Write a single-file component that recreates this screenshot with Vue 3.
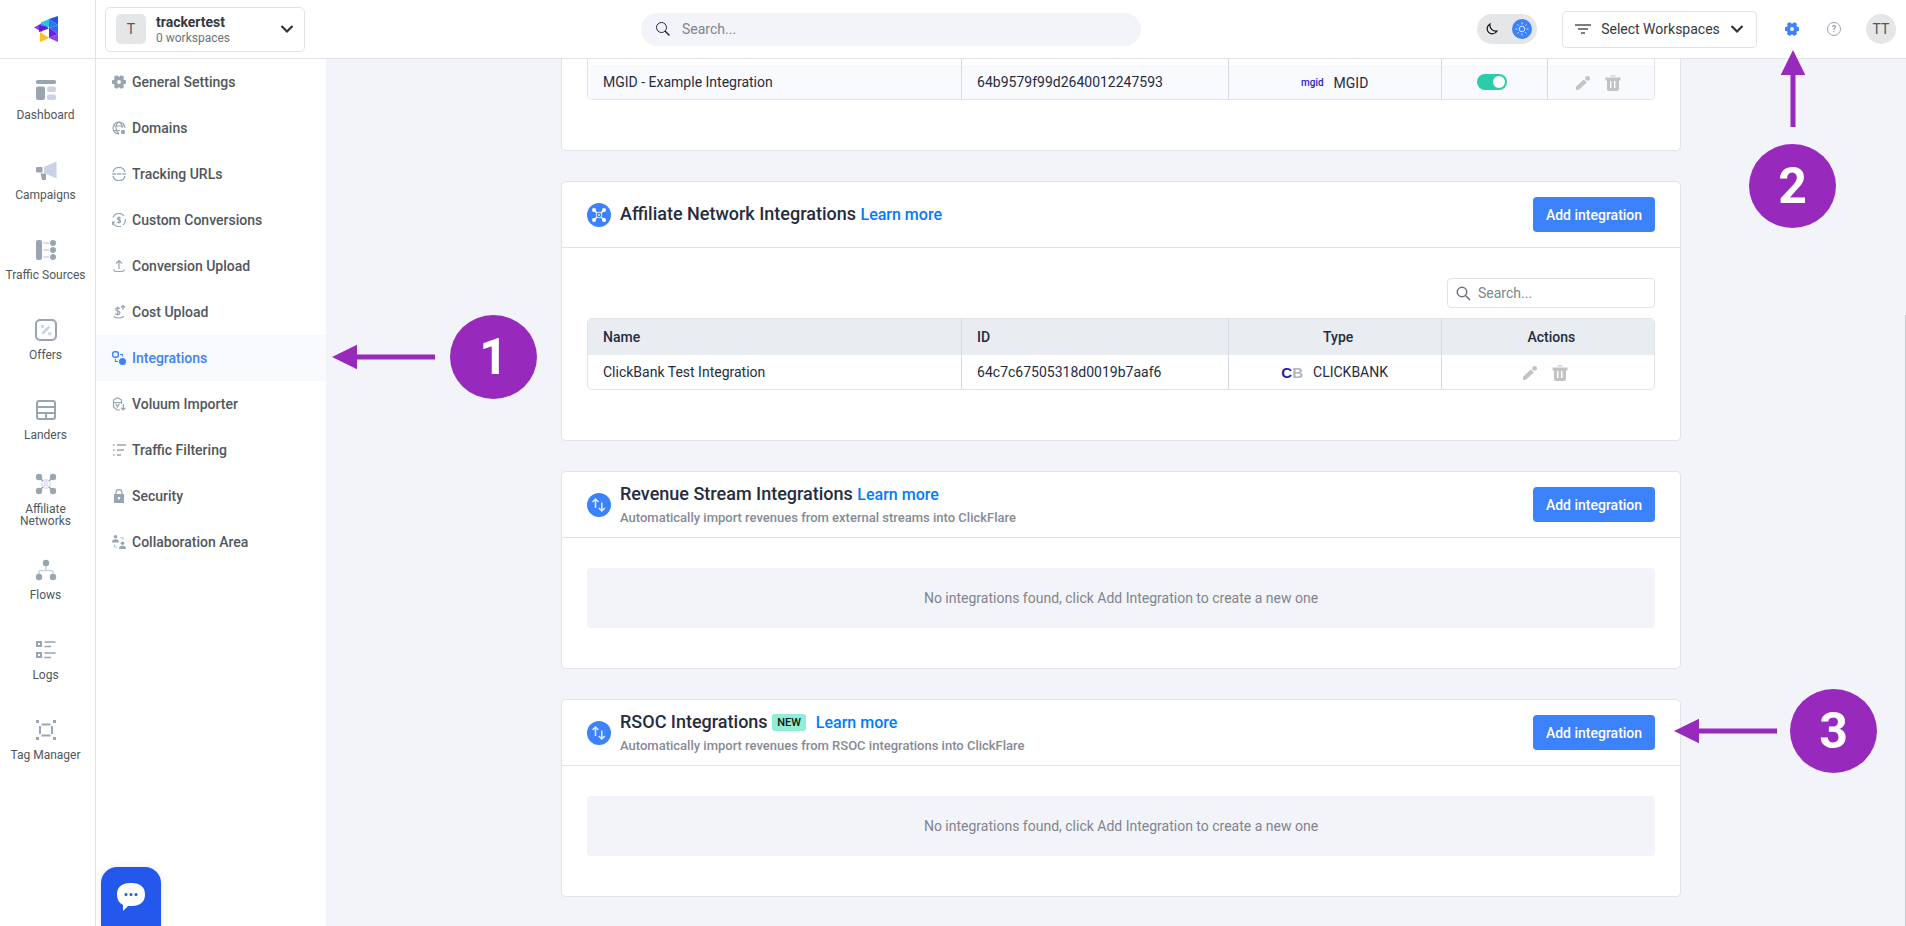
<script setup>
import { ref } from "vue";

const topSearch = ref("");
const tableSearch = ref("");
const mgidEnabled = ref(true);

const mainNav = [
  { label: "Dashboard", icon: "dashboard" },
  { label: "Campaigns", icon: "campaigns" },
  { label: "Traffic Sources", icon: "sources" },
  { label: "Offers", icon: "offers" },
  { label: "Landers", icon: "landers" },
  { label: "Affiliate Networks", icon: "networks" },
  { label: "Flows", icon: "flows" },
  { label: "Logs", icon: "logs" },
  { label: "Tag Manager", icon: "tags" },
];

const settingsNav = [
  { label: "General Settings", icon: "gear" },
  { label: "Domains", icon: "globe" },
  { label: "Tracking URLs", icon: "www" },
  { label: "Custom Conversions", icon: "conversions" },
  { label: "Conversion Upload", icon: "upload" },
  { label: "Cost Upload", icon: "cost" },
  { label: "Integrations", icon: "integrations", active: true },
  { label: "Voluum Importer", icon: "importer" },
  { label: "Traffic Filtering", icon: "filter" },
  { label: "Security", icon: "lock" },
  { label: "Collaboration Area", icon: "collab" },
];

const emptyCards = [
  {
    title: "Revenue Stream Integrations",
    text: "Automatically import revenues from external streams into ClickFlare",
  },
  {
    title: "RSOC Integrations",
    text: "Automatically import revenues from RSOC integrations into ClickFlare",
    isNew: true,
  },
];

const steps = [
  { number: 1, direction: "left" },
  { number: 2, direction: "up" },
  { number: 3, direction: "left" },
];
</script>

<template>
  <!-- shared shapes -->
  <svg class="sprite" aria-hidden="true">
    <symbol id="gear" viewBox="0 0 14 14">
      <circle cx="7" cy="7" r="3.700" fill="none" stroke="currentColor" stroke-width="3.600" />
      <g fill="currentColor">
        <rect x="0" y="5" width="3" height="4" rx=".8" />
        <rect x="0" y="5" width="3" height="4" rx=".8" transform="rotate(60 7 7)" />
        <rect x="0" y="5" width="3" height="4" rx=".8" transform="rotate(120 7 7)" />
        <rect x="0" y="5" width="3" height="4" rx=".8" transform="rotate(180 7 7)" />
        <rect x="0" y="5" width="3" height="4" rx=".8" transform="rotate(240 7 7)" />
        <rect x="0" y="5" width="3" height="4" rx=".8" transform="rotate(300 7 7)" />
      </g>
    </symbol>
    <symbol id="chevron" viewBox="0 0 14 10">
      <path d="M1.500 2 7 7.500 12.500 2" fill="none" stroke="#2f343b" stroke-width="2.200" />
    </symbol>
    <symbol id="pencil" viewBox="0 0 16 16">
      <path fill="#c3c3c3" d="M1 15v-3.200l7.800-7.400 3 3L4.200 14.600z" />
      <circle cx="12.600" cy="3.400" r="2.400" fill="#c3c3c3" />
    </symbol>
    <symbol id="trash" viewBox="0 0 16 16">
      <path fill="#cdd3e8" d="M5 1.500Q5.500 0 7 0h2q1.500 0 2 1.500z" />
      <path fill="#c3c3c3" fill-rule="evenodd" d="M.5 2.500h15v3H14V14q0 2-2 2H4q-2 0-2-2V5.500H.5zM5 6v7h1.500V6zm4 0v7h1.500V6z" />
    </symbol>
    <symbol id="arrows" viewBox="0 0 24 24">
      <circle cx="12" cy="12" r="12" fill="#3b82fc" />
      <path d="M8.500 15V6M5.500 9l3-3 3 3M14.800 9.500v8M11.800 15l3 3 3-3" fill="none" stroke="#e3ebfd" stroke-width="1.500" />
    </symbol>
  </svg>

  <div class="app">
    <header class="topbar">
      <a class="logo" href="#" aria-label="ClickFlare">
        <svg width="24" height="26" viewBox="0 0 24 26">
          <path fill="#8b3cf0" d="M0 11.500 8 7v9z" />
          <path fill="#2bc1e0" d="M7 6.500 15 3v8z" />
          <path fill="#26a8dc" d="M7 6.500V14l8-3z" />
          <path fill="#2352e8" d="M15 3 24 0v9z" />
          <path fill="#3173f0" d="M15 3v9l9-3z" />
          <path fill="#5a1fd6" d="M5 9v7l10-3.500-3-2z" />
          <path fill="#2d6eea" d="M24 9v9l-9-6z" />
          <path fill="#6a22e0" d="M15 12v10l9-4z" />
          <path fill="#8b45f0" d="M24 18v8l-9-4z" />
          <path fill="#fdbf2d" d="M6 16v10l9-4z" />
        </svg>
      </a>
      <button class="account">
        <span class="accountLetter">T</span>
        <span class="accountText">
          <strong>trackertest</strong>
          <small>0 workspaces</small>
        </span>
        <svg width="14" height="10"><use href="#chevron" /></svg>
      </button>

      <label class="topSearch">
        <svg width="14" height="14" viewBox="0 0 14 14" fill="none" stroke="#23283a">
          <circle cx="5.500" cy="5.500" r="5" />
          <path d="m9 9 4.500 4.500" stroke-width="1.500" />
        </svg>
        <input v-model="topSearch" type="text" placeholder="Search..." aria-label="Search" />
      </label>

      <div class="actions">
        <button class="theme" aria-label="Switch theme">
          <svg width="12" height="12" viewBox="0 0 12 12" fill="none" stroke="#111" stroke-width="1.200">
            <path d="M4 1a5.200 5.200 0 1 0 7 7A6 6 0 0 1 4 1z" />
          </svg>
          <span class="themeKnob">
            <svg width="14" height="14" viewBox="0 0 14 14" fill="none" stroke="#d6e5ff">
              <circle cx="7" cy="7" r="2.800" />
              <path d="M7 .5v2M7 11.500v2M.5 7h2M11.500 7h2M2.400 2.400l1.400 1.400M10.200 10.200l1.400 1.400M2.400 11.600l1.400-1.400M10.200 3.800l1.400-1.400" />
            </svg>
          </span>
        </button>
        <button class="workspaces">
          <svg width="16" height="10" viewBox="0 0 16 10" stroke="#50565e" stroke-width="1.500">
            <path d="M0 1h16M3 5h10M6 9h4" />
          </svg>
          <span>Select Workspaces</span>
          <svg width="14" height="10"><use href="#chevron" /></svg>
        </button>
        <button class="iconButton settings" aria-label="Settings">
          <svg width="14" height="14"><use href="#gear" /></svg>
        </button>
        <button class="iconButton help" aria-label="Help">?</button>
        <button class="avatar">TT</button>
      </div>
    </header>

    <div class="body">
      <nav class="rail">
        <a v-for="item in mainNav" :key="item.label" href="#">
          <svg width="22" height="22" viewBox="0 0 22 22" fill="#99a5b0">
            <template v-if="item.icon === 'dashboard'">
              <rect x="1" y="1" width="20" height="4" rx="1.500" />
              <rect x="1" y="7.500" width="9" height="13.500" rx="2" />
              <rect x="12" y="7.500" width="9" height="5.500" rx="2" fill="#ccd2e6" />
              <rect x="12" y="15.500" width="9" height="5.500" rx="2" fill="#ccd2e6" />
            </template>
            <template v-else-if="item.icon === 'campaigns'">
              <rect x="1" y="8" width="6.500" height="5.500" rx="1" />
              <path d="M5.500 14.500H11V20q0 1-1 1H7z" />
              <path d="M9 8 21.500 2.500v17L9 14z" fill="#ccd2e6" />
            </template>
            <template v-else-if="item.icon === 'sources'">
              <rect x="1" y="1" width="6" height="20" rx="2" />
              <path d="M8.500 4H14M8.500 11H14M8.500 18H14" stroke="#ccd2e6" stroke-width="1.500" />
              <circle cx="18" cy="4" r="3" /><circle cx="18" cy="11" r="3" /><circle cx="18" cy="18" r="3" />
            </template>
            <template v-else-if="item.icon === 'offers'">
              <rect x="1" y="1" width="20" height="20" rx="4" fill="none" stroke="#99a5b0" stroke-width="2" />
              <path d="m7.500 14.500 7-7" stroke="#ccd2e6" stroke-width="2.500" />
              <circle cx="7.500" cy="7.500" r="1.700" fill="#ccd2e6" /><circle cx="14.700" cy="14.700" r="1.700" fill="#ccd2e6" />
            </template>
            <template v-else-if="item.icon === 'landers'">
              <path d="M2 4q0-2 2-2h14q2 0 2 2v14q0 2-2 2H4q-2 0-2-2zM2 8h18M2 14h18M11 14v6" fill="none" stroke="#99a5b0" stroke-width="2" />
            </template>
            <template v-else-if="item.icon === 'networks'">
              <path d="m4 4 14 14M18 4 4 18" stroke="#99a5b0" stroke-width="1.500" />
              <circle cx="4" cy="4" r="3.200" /><circle cx="18" cy="4" r="3.200" /><circle cx="4" cy="18" r="3.200" /><circle cx="18" cy="18" r="3.200" />
              <circle cx="11" cy="11" r="4.200" fill="#fff" stroke="#ccd2e6" />
              <circle cx="11" cy="9.700" r="1.500" fill="none" stroke="#ccd2e6" /><path d="M8 13.500q3-3 6 0" fill="none" stroke="#ccd2e6" />
            </template>
            <template v-else-if="item.icon === 'flows'">
              <path d="M11 6v5.500M4 16v-2.500q0-2 2-2h10q2 0 2 2V16" fill="none" stroke="#ccd2e6" stroke-width="1.500" />
              <circle cx="11" cy="4" r="3.200" /><circle cx="4" cy="18" r="3.200" /><circle cx="18" cy="18" r="3.200" />
            </template>
            <template v-else-if="item.icon === 'logs'">
              <path d="M2 3h4v4H2zM2 14h4v4H2z" fill="none" stroke="#99a5b0" stroke-width="2" />
              <path d="M9.500 3H20.500M9.500 7.500h6.500M9.500 14H20.500M9.500 18.500h6.500" stroke="#99a5b0" stroke-width="1.700" />
            </template>
            <template v-else>
              <path d="M6.500 5.500h9M5 7v8M17 7v8M6.500 16.500h9" stroke="#99a5b0" stroke-width="2" />
              <path d="M1 1h3v3H1zM18 1h3v3h-3zM1 18h3v3H1zM18 18h3v3h-3z" />
            </template>
          </svg>
          <span>{{ item.label }}</span>
        </a>
      </nav>

      <nav class="settingsNav">
        <a v-for="item in settingsNav" :key="item.label" href="#" :class="{ active: item.active }">
          <svg width="14" height="14" viewBox="0 0 14 14" fill="none" stroke="currentColor" stroke-width="1.200">
            <use v-if="item.icon === 'gear'" href="#gear" stroke="none" />
            <template v-else-if="item.icon === 'globe'">
              <path d="M13 7A6 6 0 1 0 7 13M7 1Q3.500 3 4 7t3 6M7 1q3.500 2 3 6M1.500 5h11M1.500 9.500H8" />
              <circle cx="11" cy="11" r="2.200" fill="currentColor" stroke="none" />
            </template>
            <template v-else-if="item.icon === 'www'">
              <path d="M1 5a6.200 6.200 0 0 1 12 0M1 9a6.200 6.200 0 0 0 12 0" />
              <path d="m0 6 1 2 1-2 1 2 1-2m1 0 1 2 1-2 1 2 1-2m1 0 1 2 1-2 1 2 1-2" stroke-width=".8" />
            </template>
            <template v-else-if="item.icon === 'conversions'">
              <path d="M1 4.500A6.300 6.300 0 0 1 12 3M13.300 6A6.300 6.300 0 0 1 11 12M9 13.300A6.300 6.300 0 0 1 1 9.500M.5 12V9H3" />
              <path d="M8.800 5.200Q7 4 5.600 5q-.8 1 1.400 1.900T8.500 9Q7 10.200 5.200 8.900M7 3.500v7" />
            </template>
            <template v-else-if="item.icon === 'upload'">
              <path d="M7 10V1.500M4 4.500l3-3 3 3M1.500 10.500Q2 12.500 4 12.500h6q2 0 2.500-2" />
            </template>
            <template v-else-if="item.icon === 'cost'">
              <path d="M8 3.800Q6 2.200 4 3.500 3 5.200 5.800 6T7.500 9Q5.500 10.300 3.200 8.800M5.700 1.500v9M1.500 11.500q5 3 10.500 0M11 5V1M9 2.500l2-2 2 2" />
            </template>
            <template v-else-if="item.icon === 'integrations'">
              <rect x=".7" y=".7" width="5.600" height="5.600" rx="2" stroke-width="1.400" />
              <circle cx="10.500" cy="10.500" r="3.500" fill="currentColor" stroke="none" />
              <path d="M8 3.500h2.500v2M3.500 8v2.500H6" />
            </template>
            <template v-else-if="item.icon === 'importer'">
              <path d="M9.500 7V3L5.500.8 1.500 3v7L5 13h3M1.500 5.500h8M3.500 6.500 5.500 10l2-3.500M11.300 7v6M9 10.800l2.300 2.200 2.200-2.200" />
            </template>
            <template v-else-if="item.icon === 'filter'">
              <path d="M1 2h1.500M5 2h9M1 7h1.500M5 7h7M1 12h1.500M5 12h4" stroke-width="1.500" />
            </template>
            <template v-else-if="item.icon === 'lock'">
              <path d="M4 5V3.500a3 3 0 0 1 6 0V5" stroke-width="1.300" />
              <path d="M2 5h10v9H2zm5 3a1.300 1.300 0 1 0 0 2.600A1.300 1.300 0 0 0 7 8z" fill="currentColor" fill-rule="evenodd" stroke="none" />
            </template>
            <template v-else>
              <g fill="currentColor" stroke="none">
                <circle cx="3.500" cy="1.800" r="1.800" /><path d="M0 7.500Q0 4.300 3.500 4.300T7 7.500z" />
                <circle cx="10.500" cy="8.300" r="1.800" /><path d="M7 14q0-3.200 3.500-3.200T14 14z" />
              </g>
              <path d="M8.500 2.500h2.500V5M2.500 9.500V12H5" stroke="#c2c9d2" />
            </template>
          </svg>
          {{ item.label }}
        </a>
      </nav>

      <main class="content">
        <div class="cards">
          <section class="card cardCut">
            <table>
              <colgroup>
                <col class="colName" /><col class="colId" /><col class="colType" /><col class="colHalf" /><col class="colHalf" />
              </colgroup>
              <tbody>
                <tr class="cutRow"><td></td><td></td><td></td><td></td><td></td></tr>
                <tr class="striped">
                  <td>MGID - Example Integration</td>
                  <td>64b9579f99d2640012247593</td>
                  <td class="center"><span class="type"><b class="mgid">mgid</b>MGID</span></td>
                  <td class="center controls"><input v-model="mgidEnabled" class="switch" type="checkbox" aria-label="Enabled" /></td>
                  <td class="center controls">
                    <span class="rowActions">
                      <button aria-label="Edit"><svg width="16" height="16"><use href="#pencil" /></svg></button>
                      <button aria-label="Delete"><svg width="16" height="16"><use href="#trash" /></svg></button>
                    </span>
                  </td>
                </tr>
              </tbody>
            </table>
          </section>

          <section class="card">
            <div class="cardHead">
              <svg width="24" height="24" viewBox="0 0 24 24">
                <circle cx="12" cy="12" r="12" fill="#3b82fc" />
                <g fill="#fff">
                  <circle cx="7" cy="7" r="2" /><circle cx="17" cy="7" r="2" /><circle cx="7" cy="17" r="2" /><circle cx="17" cy="17" r="2" />
                </g>
                <path d="m7 7 10 10M17 7 7 17" stroke="#fff" stroke-width="1.500" />
                <circle cx="12" cy="12" r="2.800" fill="#3b82fc" stroke="#dfeafe" />
                <circle cx="12" cy="12" r="1" fill="#dfeafe" />
              </svg>
              <h2>Affiliate Network Integrations <a href="#">Learn more</a></h2>
              <button class="add">Add integration</button>
            </div>
            <div class="cardBody">
              <label class="tableSearch">
                <svg width="15" height="15" viewBox="0 0 15 15" fill="none" stroke="#6b7078" stroke-width="1.500">
                  <circle cx="6" cy="6" r="4.700" />
                  <path d="m9.500 9.500 4.500 4.500" />
                </svg>
                <input v-model="tableSearch" type="text" placeholder="Search..." aria-label="Search integrations" />
              </label>
              <table>
                <colgroup>
                  <col class="colName" /><col class="colId" /><col class="colType" /><col class="colType" />
                </colgroup>
                <thead>
                  <tr>
                    <th>Name</th>
                    <th>ID</th>
                    <th class="center">Type</th>
                    <th class="center">Actions</th>
                  </tr>
                </thead>
                <tbody>
                  <tr>
                    <td>ClickBank Test Integration</td>
                    <td>64c7c67505318d0019b7aaf6</td>
                    <td class="center"><span class="type"><b class="clickbank">C<i>B</i></b>CLICKBANK</span></td>
                    <td class="center controls">
                      <span class="rowActions">
                        <button aria-label="Edit"><svg width="16" height="16"><use href="#pencil" /></svg></button>
                        <button aria-label="Delete"><svg width="16" height="16"><use href="#trash" /></svg></button>
                      </span>
                    </td>
                  </tr>
                </tbody>
              </table>
            </div>
          </section>

          <section v-for="card in emptyCards" :key="card.title" class="card">
            <div class="cardHead">
              <svg width="24" height="24"><use href="#arrows" /></svg>
              <div>
                <h2>
                  {{ card.title }}
                  <span v-if="card.isNew" class="badge">NEW</span>
                  <a href="#">Learn more</a>
                </h2>
                <p>{{ card.text }}</p>
              </div>
              <button class="add">Add integration</button>
            </div>
            <div class="cardBody">
              <div class="empty">No integrations found, click Add Integration to create a new one</div>
            </div>
          </section>
        </div>
      </main>
    </div>

    <button class="chat" aria-label="Open chat">
      <svg width="28" height="28" viewBox="0 0 28 28">
        <path fill="#fff" d="M13 0h2c8 0 13 4 13 11.500S23 23 15 23h-4l-5 5v-6C2 20 0 16.500 0 11.500 0 4 5 0 13 0z" />
        <g fill="#2457eb"><circle cx="9" cy="11.500" r="1.500" /><circle cx="14" cy="11.500" r="1.500" /><circle cx="19" cy="11.500" r="1.500" /></g>
      </svg>
    </button>

    <div v-for="step in steps" :key="step.number" :class="['step', step.direction, 'step' + step.number]">
      <svg v-if="step.direction === 'left'" width="103" height="26" viewBox="0 0 103 26">
        <path fill="#9829bd" d="M0 13 25 .7v9.800h78v5H25v9.800z" />
      </svg>
      <svg v-else width="26" height="77" viewBox="0 0 26 77">
        <path fill="#9829bd" d="M13 0 25.300 25h-9.800v52h-5V25H.7z" />
      </svg>
      <span>{{ step.number }}</span>
    </div>
    <div class="scrollThumb"></div>
  </div>
</template>

<style>
body {
  margin: 0;
}
</style>

<style scoped>
* {
  box-sizing: border-box;
}

.sprite {
  position: absolute;
  width: 0;
  height: 0;
}

.app {
  position: relative;
  display: flex;
  flex-direction: column;
  height: 100vh;
  overflow: hidden;
  background-color: #f3f4fa;
  font-family: Roboto, "Liberation Sans", sans-serif;
  font-size: 14px;
  color: #262c40;
}

button,
input {
  font-family: inherit;
  font-size: inherit;
}

button {
  padding: 0;
  border: none;
  background: none;
  cursor: pointer;
}

a {
  text-decoration: none;
}

svg {
  display: block;
  flex-shrink: 0;
}

/* header */
.topbar {
  display: flex;
  align-items: center;
  height: 59px;
  flex-shrink: 0;
  padding-right: 10px;
  background-color: #fff;
  border-bottom: 1px solid #e2e3e7;
}

.logo {
  width: 96px;
  height: 58px;
  padding-left: 34px;
  display: flex;
  align-items: center;
  border-right: 1px solid #e2e3e7;
}

.account {
  width: 200px;
  height: 45px;
  margin-left: 9px;
  padding: 0 10px;
  display: flex;
  align-items: center;
  gap: 10px;
  border: 1px solid #e2e3e7;
  border-radius: 5px;
  text-align: left;
}

.accountLetter {
  width: 30px;
  height: 30px;
  border-radius: 5px;
  background-color: #e4e6e8;
  color: #50575e;
  line-height: 30px;
  text-align: center;
}

.accountText {
  flex: 1;
  padding-top: 2px;
  display: flex;
  flex-direction: column;
  color: #343a40;
}

.accountText strong {
  font-size: 14px;
  line-height: 16px;
}

.accountText small {
  font-size: 12px;
  line-height: 16px;
  color: #6c757d;
}

.topSearch {
  width: 500px;
  height: 33px;
  margin: 0 auto;
  padding: 0 15px;
  display: flex;
  align-items: center;
  gap: 12px;
  border-radius: 17px;
  background-color: #f3f4fa;
}

.topSearch input,
.tableSearch input {
  flex: 1;
  min-width: 0;
  padding: 0;
  border: none;
  outline: none;
  background: none;
  color: #262c40;
}

input::placeholder {
  color: #80848c;
  opacity: 1;
}

.actions {
  display: flex;
  align-items: center;
  gap: 25px;
}

.theme {
  width: 60px;
  height: 30px;
  padding: 0 5px 0 9px;
  display: flex;
  align-items: center;
  justify-content: space-between;
  border-radius: 15px;
  background-color: #e4e6e8;
}

.themeKnob {
  width: 20px;
  height: 20px;
  display: grid;
  place-items: center;
  border-radius: 50%;
  background-color: #3b82fc;
}

.workspaces {
  width: 195px;
  height: 37px;
  padding: 0 12px;
  display: flex;
  align-items: center;
  justify-content: space-between;
  border: 1px solid #e2e3e7;
  border-radius: 4px;
  color: #343a40;
}

.iconButton {
  width: 14px;
  height: 14px;
  margin-left: 3px;
}

.settings {
  color: #3b82fc;
}

.help {
  border: 1px solid #99a5b0;
  border-radius: 50%;
  color: #99a5b0;
  font-size: 9px;
  font-weight: 700;
  line-height: 12px;
}

.avatar {
  width: 30px;
  height: 30px;
  border-radius: 50%;
  background-color: #e4e6e8;
  color: #50575e;
}

/* side menus */
.body {
  flex: 1;
  min-height: 0;
  display: flex;
}

.rail {
  width: 96px;
  flex-shrink: 0;
  padding: 1px 7px 0 3px;
  background-color: #fff;
  border-right: 1px solid #e2e3ea;
}

.rail a {
  height: 80px;
  display: flex;
  flex-direction: column;
  align-items: center;
  justify-content: center;
  gap: 8px;
  color: #50575e;
  font-size: 12px;
  line-height: 12px;
  text-align: center;
}

.settingsNav {
  width: 230px;
  flex-shrink: 0;
  background-color: #fff;
}

.settingsNav a {
  height: 46px;
  padding-left: 16px;
  display: flex;
  align-items: center;
  gap: 6px;
  color: #50575e;
  font-weight: 500;
}

.settingsNav svg {
  color: #99a5b0;
}

.settingsNav .active {
  background-color: #f9fafe;
}

.settingsNav .active,
.settingsNav .active svg {
  color: #3b82fc;
}

/* cards */
.content {
  flex: 1;
  min-width: 0;
  padding-left: 10px;
}

.cards {
  max-width: 1120px;
  margin: 0 auto;
  display: flex;
  flex-direction: column;
  gap: 30px;
}

.card {
  background-color: #fff;
  border: 1px solid #e2e3e7;
  border-radius: 5px;
}

.cardCut {
  padding: 0 25px 50px;
  border-top: none;
  border-top-left-radius: 0;
  border-top-right-radius: 0;
}

.cardHead {
  height: 66px;
  padding: 0 25px;
  display: flex;
  align-items: center;
  gap: 9px;
  border-bottom: 1px solid #e2e3e7;
}

.cardHead h2 {
  margin: 0;
  font-size: 18px;
  font-weight: 500;
  line-height: 22px;
}

.cardHead h2 a {
  color: #007bff;
  font-size: 16px;
}

.cardHead p {
  margin: 4px 0 0;
  color: #868a96;
  font-size: 13px;
  font-weight: 500;
  line-height: 16px;
}

.badge {
  display: inline-block;
  height: 17px;
  margin-right: 10px;
  padding: 0 5px;
  border-radius: 3px;
  background-color: #90efd3;
  color: #111;
  font-size: 11px;
  line-height: 17px;
  vertical-align: 2px;
}

.add {
  width: 122px;
  height: 35px;
  margin-left: auto;
  border-radius: 4px;
  background-color: #3b82fc;
  color: #fff;
  font-weight: 500;
}

.cardBody {
  padding: 30px 25px 40px;
}

.cardBody:has(table) {
  padding-bottom: 50px;
}

.tableSearch {
  width: 208px;
  height: 30px;
  margin: 0 0 10px auto;
  padding: 0 8px;
  display: flex;
  align-items: center;
  gap: 7px;
  border: 1px solid #e2e3e7;
  border-radius: 4px;
}

.empty {
  height: 60px;
  border-radius: 4px;
  background-color: #f3f4fa;
  color: #80848c;
  line-height: 60px;
  text-align: center;
}

table {
  width: 100%;
  table-layout: fixed;
  border: 1px solid #e2e3e7;
  border-radius: 5px;
  border-spacing: 0;
  overflow: hidden;
}

.cardCut table {
  border-top: none;
  border-top-left-radius: 0;
  border-top-right-radius: 0;
}

.colName {
  width: 35%;
}

.colId {
  width: 25%;
}

.colType {
  width: 20%;
}

.colHalf {
  width: 10%;
}

th,
td {
  height: 34px;
  padding: 0 15px;
  text-align: left;
}

th {
  height: 36px;
  background-color: #e9ecf1;
  font-weight: 500;
}

th + th,
td + td {
  border-left: 1px solid #d5d8e5;
}

.center {
  text-align: center;
}

th.center {
  padding-left: 22px;
}

.controls {
  padding-right: 21px;
}

.cutRow td {
  height: 6px;
}

.striped {
  background-color: #f9fafe;
}

.type,
.rowActions {
  display: inline-flex;
  align-items: center;
  gap: 10px;
  vertical-align: middle;
}

.rowActions {
  gap: 14px;
}

.mgid {
  color: #2f22c8;
  font-size: 10px;
  font-weight: 500;
}

.clickbank {
  color: #2a1fa8;
  font-family: "Liberation Sans", Arial, sans-serif;
  font-size: 15px;
}

.clickbank i {
  color: #b3b3bb;
  font-style: normal;
}

.switch {
  appearance: none;
  display: block;
  width: 30px;
  height: 16px;
  margin: 0 auto;
  padding: 2px;
  border-radius: 8px;
  background-color: #2fcaa8;
}

.switch::before {
  content: "";
  display: block;
  width: 12px;
  height: 12px;
  margin-left: auto;
  border-radius: 50%;
  background-color: #fff;
}

.switch:not(:checked) {
  background-color: #c3c3c3;
}

.switch:not(:checked)::before {
  margin-left: 0;
}

/* floating parts */
.chat {
  position: absolute;
  left: 101px;
  bottom: 0;
  width: 60px;
  height: 59px;
  display: grid;
  place-items: center;
  border-radius: 16px 16px 0 0;
  background-color: #2457eb;
  box-shadow: 0 0 6px rgba(0, 0, 0, 0.1);
}

.step {
  position: absolute;
  display: flex;
  align-items: center;
  gap: 15px;
  pointer-events: none;
}

.step.up {
  flex-direction: column;
  gap: 17px;
}

.step span {
  width: 87px;
  height: 84px;
  border-radius: 50%;
  background-color: #9829bd;
  color: #fff;
  font-size: 50px;
  font-weight: 700;
  line-height: 84px;
  text-align: center;
}

.step1 {
  top: 315px;
  left: 332px;
}

.step2 {
  top: 50px;
  right: 70px;
}

.step3 {
  top: 689px;
  right: 29px;
  gap: 13px;
}

.scrollThumb {
  position: absolute;
  top: 315px;
  right: 0;
  bottom: 0;
  width: 1px;
  background-color: #c9cacd;
}
</style>
